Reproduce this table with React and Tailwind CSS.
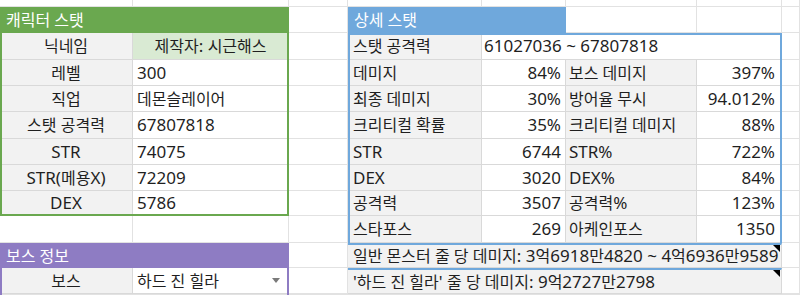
const ROWS = ['row-start-1', 'row-start-2', 'row-start-3', 'row-start-4', 'row-start-5', 'row-start-6', 'row-start-7', 'row-start-8', 'row-start-9', 'row-start-10', 'row-start-11', 'row-start-12', 'row-start-13']
const COLS = ['col-start-1', 'col-start-2', 'col-start-3', 'col-start-4', 'col-start-5', 'col-start-6', 'col-start-7', 'col-start-8']

const charRows = [
  ['닉네임', '제작자: 시근해스'],
  ['레벨', '300'],
  ['직업', '데몬슬레이어'],
  ['스탯 공격력', '67807818'],
  ['STR', '74075'],
  ['STR(메용X)', '72209'],
  ['DEX', '5786'],
]

const detailRows = [
  ['데미지', '84%', '보스 데미지', '397%'],
  ['최종 데미지', '30%', '방어율 무시', '94.012%'],
  ['크리티컬 확률', '35%', '크리티컬 데미지', '88%'],
  ['STR', '6744', 'STR%', '722%'],
  ['DEX', '3020', 'DEX%', '84%'],
  ['공격력', '3507', '공격력%', '123%'],
  ['스타포스', '269', '아케인포스', '1350'],
]

// hangul runs a little smaller than latin, like the sheet's font
const T = ({ children }) => (
  <span className="whitespace-pre">
    {String(children)
      .split(/([\uAC00-\uD7A3][\uAC00-\uD7A3 ]*[\uAC00-\uD7A3]|[\uAC00-\uD7A3])/)
      .map((p, i) =>
        /[\uAC00-\uD7A3]/.test(p) ? (
          <span key={i} className="text-[16px]">{p}</span>
        ) : (
          p
        )
      )}
  </span>
)

const cell = 'flex items-center overflow-hidden whitespace-nowrap border-r border-b border-[#d9d9d9]'

const NoteMark = () => (
  <span className="absolute top-0 right-[1px] w-0 h-0 border-l-[7px] border-l-transparent border-t-[7px] border-t-black" />
)

export default function App() {
  return (
    <div className="w-[800px] h-[295px] overflow-hidden bg-white font-['Noto_Sans','Noto_Sans_CJK_KR',sans-serif] text-[17px] text-[#1f1f1f]">
      <div className="grid h-full grid-cols-[133px_156px_59px_134px_84px_131px_85px_1fr] grid-rows-[7px_26px_27px_26px_26px_27px_26px_26px_25px_27px_25px_26px_1fr]">
        {ROWS.map(r =>
          COLS.map(c => (
            <div key={r + c} className={`${r} ${c} border-r border-b border-[#e2e2e2]`} />
          ))
        )}

        {/* 캐릭터 스탯 */}
        <div className="col-start-1 col-span-2 row-start-2 flex items-center pl-[6px] bg-[#6aa84f] text-white">
          <T>캐릭터 스탯</T>
        </div>
        {charRows.map(([k, v], i) => (
          <div key={k} className="contents">
            <div className={`${ROWS[i + 2]} col-start-1 ${cell} justify-center bg-[#f2f2f2]`}>
              <T>{k}</T>
            </div>
            <div
              className={`${ROWS[i + 2]} col-start-2 ${cell} ${
                i === 0 ? 'justify-center bg-[#d9ead3]' : 'pl-[4px] bg-white'
              }`}
            >
              <T>{v}</T>
            </div>
          </div>
        ))}
        <div className="col-start-1 col-span-2 row-start-2 row-span-8 border-2 border-[#6aa84f] pointer-events-none" />

        {/* 보스 정보 */}
        <div className="col-start-1 col-span-2 row-start-11 flex items-center pl-[6px] bg-[#8e7cc3] text-white">
          <T>보스 정보</T>
        </div>
        <div className={`row-start-12 col-start-1 ${cell} justify-center bg-[#f2f2f2]`}>
          <T>보스</T>
        </div>
        <div className={`row-start-12 col-start-2 ${cell} justify-between pl-[4px] pr-[8px] bg-white`}>
          <T>하드 진 힐라</T>
          <span className="w-0 h-0 border-x-[4px] border-x-transparent border-t-[5px] border-t-[#7a7a7a]" />
        </div>
        <div className="col-start-1 col-span-2 row-start-11 row-span-3 border-x-2 border-[#8e7cc3] pointer-events-none" />

        {/* 상세 스탯 */}
        <div className="col-start-4 col-span-2 row-start-2 flex items-center pl-[6px] bg-[#6fa8dc] text-white">
          <T>상세 스탯</T>
        </div>
        <div className={`row-start-3 col-start-4 ${cell} pl-[5px] bg-[#f2f2f2]`}>
          <T>스탯 공격력</T>
        </div>
        <div className={`row-start-3 col-start-5 col-span-3 ${cell} pl-[2px] bg-white`}>
          61027036 ~ 67807818
        </div>
        {detailRows.map(([a, b, c, d], i) => (
          <div key={a} className="contents">
            <div className={`${ROWS[i + 3]} col-start-4 ${cell} pl-[5px] bg-[#f2f2f2]`}>
              <T>{a}</T>
            </div>
            <div className={`${ROWS[i + 3]} col-start-5 ${cell} justify-end pr-[4px] bg-white`}>{b}</div>
            <div className={`${ROWS[i + 3]} col-start-6 ${cell} pl-[3px] bg-[#f2f2f2]`}>
              <T>{c}</T>
            </div>
            <div className={`${ROWS[i + 3]} col-start-7 ${cell} justify-end pr-[6px] bg-white`}>{d}</div>
          </div>
        ))}
        <div className={`row-start-11 col-start-4 col-span-4 ${cell} relative pl-[5px] bg-[#f2f2f2] border-t-2 border-t-[#6fa8dc]`}>
          <T>일반 몬스터 줄 당 데미지: 3억6918만4820 ~ 4억6936만9589</T>
          <NoteMark />
        </div>
        <div className={`row-start-12 col-start-4 col-span-4 ${cell} relative pl-[5px] bg-[#f2f2f2] border-t-2 border-t-[#6fa8dc]`}>
          <T>'하드 진 힐라' 줄 당 데미지: 9억2727만2798</T>
          <NoteMark />
        </div>
        <div className="col-start-4 col-span-4 row-start-3 row-span-10 border-2 border-[#6fa8dc] pointer-events-none" />
      </div>
    </div>
  )
}
